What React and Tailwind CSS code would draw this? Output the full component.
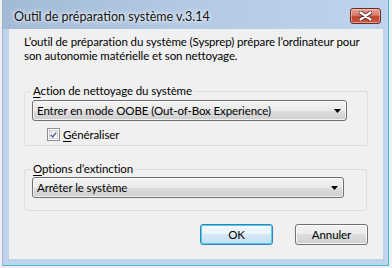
import React from "react";

function Arrow() {
  return (
    <svg width="7" height="4" viewBox="0 0 7 4" className="block">
      <path d="M0 0H7L3.5 4Z" fill="#000" />
    </svg>
  );
}

function Combo({ text, width }) {
  return (
    <div
      className={`relative h-[21px] ${width} rounded-[3px] border border-[#707070] bg-[linear-gradient(#f2f2f2_0%,#ebebeb_50%,#dddddd_50%,#cfcfcf_100%)] shadow-[inset_0_0_0_1px_rgba(255,255,255,0.7)] flex items-center pl-[4px] pr-[5px]`}
    >
      <span className="flex-1 text-black">{text}</span>
      <Arrow />
    </div>
  );
}

export default function App() {
  return (
    <div
      className="w-[392px] h-[268px] bg-[#f0f0f0] overflow-hidden text-[11.5px] leading-[15px] tracking-[-0.1px]"
      style={{ fontFamily: 'Lato, "Noto Sans", sans-serif' }}
    >
      <div className="ml-[2px] w-[387px] h-[266px] bg-[#bfd3ec] border-l border-[#9fb6d1] border-r border-r-[#3fbfdc] border-b border-b-[#3fbfdc] flex flex-col">
        {/* title bar */}
        <div className="h-[29px] flex items-center justify-between pl-[11px] pr-[7px] bg-[linear-gradient(90deg,#a2bad6_0%,#b3c9e3_45%,#bfd3ec_100%)]">
          <span className="text-[12.5px] tracking-normal text-[#101010] pt-[3px] [text-shadow:0_0_6px_#ffffff,0_0_3px_#ffffff]">
            Outil de préparation système v.3.14
          </span>
          <div className="w-[31px] h-[16px] mt-[2px] rounded-[3px] border border-[#6b2a22] bg-[linear-gradient(#e8a598_0%,#d47a68_45%,#c4422f_55%,#c95a44_100%)] shadow-[inset_0_0_0_1px_rgba(255,220,210,0.5)] flex items-center justify-center">
            <svg width="13" height="10" viewBox="0 0 13 10">
              <path
                d="M1.5 1.5L11.5 8.5M11.5 1.5L1.5 8.5"
                stroke="#5a2a24"
                strokeWidth="4"
                strokeLinecap="round"
              />
              <path
                d="M1.5 1.5L11.5 8.5M11.5 1.5L1.5 8.5"
                stroke="#ffffff"
                strokeWidth="2.2"
                strokeLinecap="round"
              />
            </svg>
          </div>
        </div>
        {/* client area */}
        <div className="mx-[6px] w-[374px] h-[230px] bg-[#f0f0f0] pt-[6px] px-[15px] flex flex-col">
          <p className="text-black leading-[14px]">
            L’outil de préparation du système (Sysprep) prépare l’ordinateur pour son autonomie matérielle et son nettoyage.
          </p>

          {/* group 1 */}
          <div className="relative mt-[28px] w-[344px] h-[55px] rounded-[3px] border border-[#d5dfe5] pt-[8px] pl-[7px]">
            <span className="absolute -top-[9px] left-[6px] px-[2px] bg-[#f0f0f0] text-black">
              <span className="underline underline-offset-2">A</span>ction de nettoyage du système
            </span>
            <Combo text="Entrer en mode OOBE (Out-of-Box Experience)" width="w-[315px]" />
            <div className="flex items-center mt-[6px] ml-[15px] gap-[3px]">
              <div className="w-[13px] h-[13px] border border-[#8f8f8f] bg-white p-[1px]">
                <div className="w-full h-full border border-[#d0d0d0] bg-[linear-gradient(135deg,#e6e6e6,#fdfdfd)] flex items-center justify-center">
                  <svg width="9" height="8" viewBox="0 0 9 8">
                    <path d="M1 4L3.5 6.5L8 1" stroke="#3b4f8c" strokeWidth="1.6" fill="none" />
                  </svg>
                </div>
              </div>
              <span className="text-black">
                <span className="underline underline-offset-2">G</span>énéraliser
              </span>
            </div>
          </div>

          {/* group 2 */}
          <div className="relative mt-[23px] w-[343px] h-[42px] rounded-[3px] border border-[#d5dfe5] pt-[7px] pl-[7px]">
            <span className="absolute -top-[9px] left-[6px] px-[2px] bg-[#f0f0f0] text-black">
              <span className="underline underline-offset-2">O</span>ptions d’extinction
            </span>
            <Combo text="Arrêter le système" width="w-[312px]" />
          </div>

          {/* buttons */}
          <div className="flex justify-end gap-[22px] mt-[13px] w-[344px]">
            <button className="w-[73px] h-[21px] rounded-[3px] border border-[#3c7fb1] bg-[linear-gradient(#f3f9fd_0%,#eaf4fb_50%,#d3e7f5_50%,#c6e0f2_100%)] shadow-[inset_0_0_0_1px_#48d1f5] text-black leading-[15px]">
              OK
            </button>
            <button className="w-[73px] h-[21px] rounded-[3px] border border-[#707070] bg-[linear-gradient(#f2f2f2_0%,#ebebeb_50%,#dddddd_50%,#cfcfcf_100%)] shadow-[inset_0_0_0_1px_rgba(255,255,255,0.8)] text-black leading-[15px]">
              Annuler
            </button>
          </div>
        </div>
      </div>
    </div>
  );
}
